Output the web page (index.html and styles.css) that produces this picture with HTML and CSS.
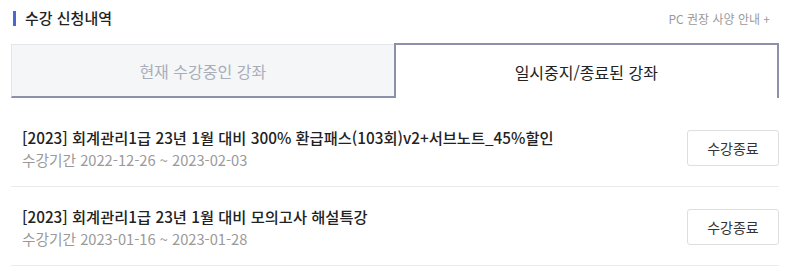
FILE: index.html
```html
<!DOCTYPE html>
<html lang="ko">
<head>
    <meta charset="UTF-8">
    <meta name="viewport" content="width=device-width, initial-scale=1.0">
    <title>수강 신청내역</title>
    <link rel="stylesheet" href="styles.css">
</head>
<body>
    <div class="wrap">
        <div class="head">
            <h2 class="head-title">수강 신청내역</h2>
            <a class="spec-link" href="#">PC 권장 사양 안내 +</a>
        </div>

        <div class="tabs">
            <div class="tab">현재 수강중인 강좌</div>
            <div class="tab active">일시중지/종료된 강좌</div>
        </div>

        <ul class="course-list">
            <li class="course">
                <div class="course-info">
                    <p class="course-name">[2023] 회계관리1급 23년 1월 대비 300% 환급패스(103회)v2+서브노트_45%할인</p>
                    <p class="course-period">수강기간 2022-12-26 ~ 2023-02-03</p>
                </div>
                <button class="btn-end">수강종료</button>
            </li>
            <li class="course">
                <div class="course-info">
                    <p class="course-name">[2023] 회계관리1급 23년 1월 대비 모의고사 해설특강</p>
                    <p class="course-period">수강기간 2023-01-16 ~ 2023-01-28</p>
                </div>
                <button class="btn-end">수강종료</button>
            </li>
        </ul>
    </div>
</body>
</html>
```

FILE: styles.css
```css
* {
    box-sizing: border-box;
    margin: 0;
    padding: 0;
}

body {
    font-family: "Noto Sans CJK KR", "Noto Sans", sans-serif;
    background-color: #fff;
    color: #222;
}

.wrap {
    width: 768px;
    margin-left: 11px;
}

.head {
    display: flex;
    justify-content: space-between;
    align-items: center;
    height: 38px;
    padding-bottom: 2px;
}

.head-title {
    font-size: 15px;
    font-weight: 500;
    line-height: 20px;
    padding-left: 14px;
    position: relative;
    color: #222;
}

.head-title::before {
    content: "";
    position: absolute;
    left: 2px;
    top: 3px;
    width: 3px;
    height: 15px;
    background-color: #4a68d0;
}

.spec-link {
    font-size: 12px;
    color: #9a9a9a;
    text-decoration: none;
    margin-right: 9px;
}

.tabs {
    display: flex;
    height: 55px;
    margin-top: 5px;
}

.tab {
    flex: 1;
    display: flex;
    align-items: center;
    justify-content: center;
    font-size: 16px;
    color: #a9adb8;
    background-color: #f5f6f8;
    border: 1px solid #e4e6ea;
    border-bottom: 2px solid #8c90a8;
    border-right: 0;
    margin-top: 1px;
}

.tab.active {
    color: #222;
    background-color: #fff;
    border: 2px solid #8c90a8;
    border-bottom: 0;
    margin-top: 0;
}

.course-list {
    list-style: none;
    margin-top: 10px;
}

.course {
    display: flex;
    align-items: center;
    justify-content: space-between;
    padding: 18px 0 16px 11px;
    border-bottom: 1px solid #ebebeb;
}

.course-name {
    font-size: 15.3px;
    font-weight: 500;
    line-height: 22px;
    color: #222;
}

.course-period {
    font-size: 14.7px;
    line-height: 20px;
    margin-top: 2px;
    color: #9a9a9a;
}

.btn-end {
    width: 92px;
    height: 36px;
    font-family: inherit;
    font-size: 14px;
    color: #333;
    background-color: #fff;
    border: 1px solid #dedede;
    border-radius: 3px;
    cursor: pointer;
}
```
